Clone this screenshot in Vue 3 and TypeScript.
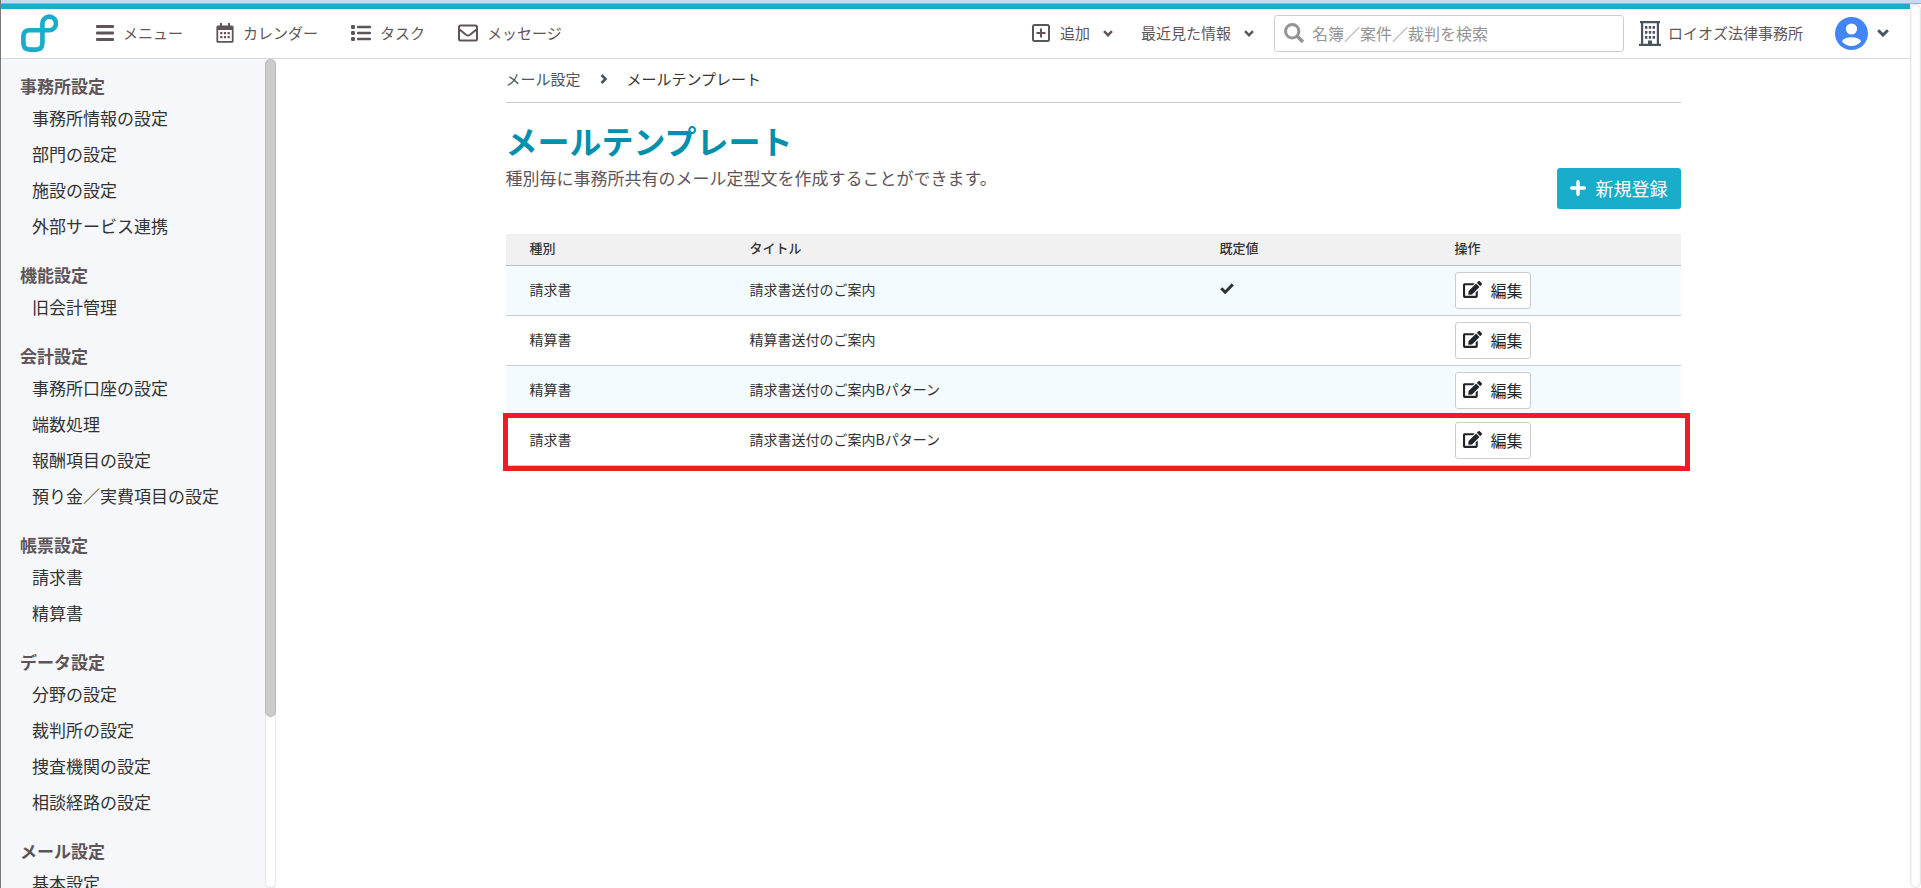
<script setup lang="ts">
interface MenuGroup {
  title: string
  items: string[]
}

interface Template {
  id: number
  kind: string
  title: string
  isDefault: boolean
  highlighted: boolean
}

const groups: MenuGroup[] = [
  { title: '事務所設定', items: ['事務所情報の設定', '部門の設定', '施設の設定', '外部サービス連携'] },
  { title: '機能設定', items: ['旧会計管理'] },
  { title: '会計設定', items: ['事務所口座の設定', '端数処理', '報酬項目の設定', '預り金／実費項目の設定'] },
  { title: '帳票設定', items: ['請求書', '精算書'] },
  { title: 'データ設定', items: ['分野の設定', '裁判所の設定', '捜査機関の設定', '相談経路の設定'] },
  { title: 'メール設定', items: ['基本設定'] },
]

const templates: Template[] = [
  { id: 1, kind: '請求書', title: '請求書送付のご案内', isDefault: true, highlighted: false },
  { id: 2, kind: '精算書', title: '精算書送付のご案内', isDefault: false, highlighted: false },
  { id: 3, kind: '精算書', title: '請求書送付のご案内Bパターン', isDefault: false, highlighted: false },
  { id: 4, kind: '請求書', title: '請求書送付のご案内Bパターン', isDefault: false, highlighted: true },
]
</script>

<template>
  <div class="window">
    <div class="window-edge"></div>
    <div class="viewport">
      <div class="app">
        <header class="header">
          <a class="logo" href="#" aria-label="ホーム">
            <svg width="37" height="38" viewBox="0 0 37 38" fill="none" stroke="#19accb" stroke-width="4.6">
              <path d="M8.5 16.2H28A6.8 6.8 0 1 0 21.4 9.4V29Q21.4 35.6 15 35.6H9Q2.4 35.6 2.4 29V22.5Q2.4 16.2 8.5 16.2Z" />
            </svg>
          </a>
          <nav class="nav">
            <button type="button" class="nav-item">
              <svg width="18" height="18" viewBox="0 0 18 18" fill="currentColor">
                <rect y="1" width="18" height="3" rx="1" />
                <rect y="7.5" width="18" height="3" rx="1" />
                <rect y="14" width="18" height="3" rx="1" />
              </svg>
              メニュー
            </button>
            <a class="nav-item" href="#">
              <svg width="18" height="20" viewBox="0 0 18 20" fill="currentColor">
                <path fill-rule="evenodd" d="M4 0h2v2.5h6V0h2v2.5h2q1.6 0 1.6 1.6v14.1q0 1.6-1.6 1.6H2Q.4 19.800 .4 18.200V4.100Q.4 2.500 2 2.500h2zM2.200 7v10.500q0 .5.500.5h12.600q.5 0 .5-.5V7z" />
                <path d="M4.200 9h2.200v2.200H4.200zM7.900 9h2.200v2.200H7.900zM11.600 9h2.200v2.200h-2.200zM4.200 13h2.200v2.200H4.200zM7.900 13h2.200v2.200H7.900zM11.600 13h2.200v2.200h-2.200z" />
              </svg>
              カレンダー
            </a>
            <a class="nav-item" href="#">
              <svg width="20" height="18" viewBox="0 0 20 18" fill="currentColor">
                <rect y="1" width="4" height="4" rx="1.200" />
                <rect y="7" width="4" height="4" rx="1.200" />
                <rect y="13" width="4" height="4" rx="1.200" />
                <rect x="6" y="1.800" width="14" height="2.400" rx=".8" />
                <rect x="6" y="7.800" width="14" height="2.400" rx=".8" />
                <rect x="6" y="13.800" width="14" height="2.400" rx=".8" />
              </svg>
              タスク
            </a>
            <a class="nav-item" href="#">
              <svg width="20" height="18" viewBox="0 0 20 18" fill="none" stroke="currentColor" stroke-width="2">
                <rect x="1" y="1.500" width="18" height="15" rx="1.500" />
                <path d="M1.500 5.500l6.500 5.300q2 1.500 4 0l6.500-5.300" />
              </svg>
              メッセージ
            </a>
          </nav>

          <div class="tools">
            <button type="button" class="drop">
              <svg class="lead" width="18" height="18" viewBox="0 0 18 18" fill="none" stroke="currentColor" stroke-width="2">
                <rect x="1" y="1" width="16" height="16" rx="1.500" />
                <path d="M4.500 9h9M9 4.500v9" />
              </svg>
              追加
              <svg class="chev" width="10" height="7" viewBox="0 0 10 7" fill="none" stroke="currentColor" stroke-width="2.400">
                <path d="M1 1.200l4 4 4-4" />
              </svg>
            </button>
            <button type="button" class="drop">
              最近見た情報
              <svg class="chev" width="10" height="7" viewBox="0 0 10 7" fill="none" stroke="currentColor" stroke-width="2.400">
                <path d="M1 1.200l4 4 4-4" />
              </svg>
            </button>
            <label class="search">
              <svg width="20" height="20" viewBox="0 0 20 20" fill="none" stroke="#949494">
                <circle cx="8.200" cy="8.200" r="6.700" stroke-width="3" />
                <path d="M13 13l6 6" stroke-width="3.600" />
              </svg>
              <input type="text" placeholder="名簿／案件／裁判を検索" aria-label="検索" />
            </label>
            <a class="office" href="#">
              <svg width="22" height="25" viewBox="0 0 22 25" fill="#4b5560">
                <path fill-rule="evenodd" d="M1 0h20v2.200h-1V22.700h2V25H0v-2.300h2V2.200H1zM4.200 2.200v20.500h4.800V19.500h4v3.200h4.800V2.200z" />
                <path d="M6 5h2.400v2.800H6zM9.800 5h2.400v2.800H9.800zM13.600 5H16v2.800h-2.400zM6 10h2.400v2.800H6zM9.800 10h2.400v2.800H9.800zM13.600 10H16v2.800h-2.400zM6 15h2.400v2.800H6zM9.800 15h2.400v2.800H9.800zM13.600 15H16v2.800h-2.400z" />
              </svg>
              ロイオズ法律事務所
            </a>
            <button type="button" class="account" aria-label="アカウント">
              <svg width="33" height="33" viewBox="0 0 33 33">
                <circle cx="16.500" cy="16.500" r="16.500" fill="#4285f4" />
                <circle cx="16.500" cy="12" r="5.600" fill="#fff" />
                <path d="M6.800 24.200Q9.500 20.300 16.500 20.300t9.700 3.900Q22.500 29 16.500 29T6.800 24.200z" fill="#fff" />
              </svg>
              <svg width="12" height="8" viewBox="0 0 12 8" fill="none" stroke="#4b5560" stroke-width="3">
                <path d="M1.200 1.300L6 6l4.800-4.700" />
              </svg>
            </button>
          </div>
        </header>

        <div class="body">
          <aside class="sidebar">
            <nav class="side-nav">
              <section v-for="group in groups" :key="group.title" class="group">
                <h2>{{ group.title }}</h2>
                <ul>
                  <li v-for="item in group.items" :key="item"><a href="#">{{ item }}</a></li>
                </ul>
              </section>
            </nav>
            <div class="side-track"><div class="side-thumb"></div></div>
          </aside>

          <main class="main">
            <div class="content">
              <nav class="crumbs" aria-label="パンくず">
                <a href="#">メール設定</a>
                <svg width="8" height="10" viewBox="0 0 8 10" fill="none" stroke="#4b5560" stroke-width="2.600">
                  <path d="M1.500 1l4 4-4 4" />
                </svg>
                <span>メールテンプレート</span>
              </nav>
              <div class="heading">
                <div>
                  <h1>メールテンプレート</h1>
                  <p>種別毎に事務所共有のメール定型文を作成することができます。</p>
                </div>
                <button type="button" class="create">
                  <svg width="16" height="16" viewBox="0 0 16 16" fill="none" stroke="#fff" stroke-width="3.400" stroke-linecap="round">
                    <path d="M1.700 8h12.600M8 1.700v12.600" />
                  </svg>
                  新規登録
                </button>
              </div>

              <table class="table">
                <colgroup>
                  <col class="col-kind" />
                  <col class="col-title" />
                  <col class="col-default" />
                  <col />
                </colgroup>
                <thead>
                  <tr>
                    <th scope="col">種別</th>
                    <th scope="col">タイトル</th>
                    <th scope="col">既定値</th>
                    <th scope="col">操作</th>
                  </tr>
                </thead>
                <tbody>
                  <tr v-for="row in templates" :key="row.id" :class="{ highlighted: row.highlighted }">
                    <td>{{ row.kind }}</td>
                    <td>{{ row.title }}</td>
                    <td>
                      <svg v-if="row.isDefault" class="check" width="14" height="11" viewBox="0 0 14 11" fill="none" stroke="#333" stroke-width="3">
                        <path d="M1.200 5.200l4 4 7.600-7.800" />
                      </svg>
                    </td>
                    <td class="action">
                      <button type="button" class="edit">
                        <svg width="19" height="17" viewBox="0 0 576 512" fill="currentColor">
                          <path d="M402.600 83.200l90.200 90.200c3.800 3.800 3.800 10 0 13.800L274.400 405.600l-92.800 10.300c-12.400 1.400-22.900-9.100-21.500-21.500l10.300-92.800L388.800 83.200c3.800-3.800 10-3.800 13.800 0zm162-22.900l-48.800-48.800c-15.200-15.200-39.900-15.200-55.200 0l-35.400 35.400c-3.800 3.800-3.800 10 0 13.800l90.200 90.200c3.800 3.800 10 3.800 13.800 0l35.400-35.400c15.200-15.300 15.200-40 0-55.200zM384 346.200V448H64V128h229.800c3.200 0 6.200-1.300 8.500-3.500l40-40c7.600-7.600 2.200-20.500-8.500-20.500H48C21.500 64 0 85.500 0 112v352c0 26.500 21.500 48 48 48h352c26.500 0 48-21.500 48-48V306.200c0-10.700-12.900-16-20.500-8.500l-40 40c-2.200 2.300-3.500 5.300-3.500 8.500z" />
                        </svg>
                        編集
                      </button>
                    </td>
                  </tr>
                </tbody>
              </table>
            </div>
          </main>
        </div>
      </div>
      <div class="page-track"></div>
    </div>
  </div>
</template>

<style>
body {
  margin: 0;
  background: #fff;
}
</style>

<style scoped>
.window {
  display: flex;
  flex-direction: column;
  height: 100vh;
  overflow: hidden;
  box-sizing: border-box;
  border-left: 1px solid #77787c;
  color: #333;
  font-family: "Noto Sans CJK JP", sans-serif;
  font-weight: 400;
  font-size: 15px;
}

.window *,
.window *::after {
  box-sizing: border-box;
}

.window svg {
  flex: none;
  display: block;
}

button {
  margin: 0;
  padding: 0;
  border: 0;
  background: none;
  color: inherit;
  font: inherit;
  cursor: pointer;
}

a {
  color: inherit;
  text-decoration: none;
}

.window-edge {
  flex: none;
  height: 4px;
  background: #c8d9f5;
  border-bottom: 1px solid #9fb0cc;
}

.viewport {
  flex: 1;
  display: flex;
  min-height: 0;
}

.app {
  flex: 1;
  min-width: 0;
  display: flex;
  flex-direction: column;
}

.page-track {
  flex: none;
  width: 11px;
  border: 1px solid #e4e4e4;
  border-radius: 6px;
  box-shadow: inset 0 0 2px #e4e4e4;
}

.header {
  flex: none;
  display: flex;
  align-items: center;
  height: 55px;
  padding: 0 21px 1px 20px;
  border-top: 5px solid #19accb;
  border-bottom: 1px solid #d9d9d9;
  color: #5f5558;
  line-height: 24px;
  white-space: nowrap;
}

.logo {
  margin-right: 38px;
}

.nav {
  display: flex;
  gap: 33px;
}

.nav-item {
  display: flex;
  align-items: center;
  gap: 9px;
}

.tools {
  display: flex;
  align-items: center;
  margin-left: auto;
}

.drop {
  display: flex;
  align-items: center;
  margin-right: 28px;
}

.drop + .search {
  margin-left: -8px;
}

.lead {
  margin-right: 10px;
}

.chev {
  margin-left: 13px;
}

.search {
  display: flex;
  align-items: center;
  gap: 8px;
  width: 350px;
  height: 37px;
  padding: 0 9px;
  border: 1px solid #cbcfd4;
  border-radius: 3px;
}

.search input {
  flex: 1;
  min-width: 0;
  padding: 0;
  border: 0;
  outline: 0;
  background: none;
  color: #333;
  font: inherit;
  font-size: 16px;
}

.search input::placeholder {
  color: #949494;
  opacity: 1;
}

.office {
  display: flex;
  align-items: center;
  gap: 7px;
  margin-left: 15px;
}

.account {
  display: flex;
  align-items: center;
  gap: 9px;
  margin-left: 32px;
}

.body {
  flex: 1;
  display: flex;
  min-height: 0;
}

.sidebar {
  flex: none;
  display: flex;
  width: 275px;
  background: #f5f7fa;
}

.side-nav {
  flex: 1;
  padding: 13px 0 0 19px;
  overflow: hidden;
  font-size: 17px;
}

.group {
  margin-bottom: 17px;
}

.group h2 {
  margin: 0;
  color: #5f5558;
  font-size: 17px;
  font-weight: 700;
  line-height: 28px;
}

.group ul {
  margin: 0;
  padding: 0 0 0 12px;
  list-style: none;
}

.group li {
  line-height: 36px;
}

.side-track {
  flex: none;
  width: 11px;
  background: #fff;
  border: 1px solid #e8e8ea;
  border-top: 0;
  border-radius: 6px;
}

.side-thumb {
  height: 79.5%;
  margin: 0 -1px;
  border: 1px solid #b9b9b9;
  border-radius: 6px;
  background: #cbcbcb;
}

.main {
  flex: 1;
  min-width: 0;
  overflow: hidden;
}

.content {
  width: 100%;
  max-width: 1175px;
  margin: 0 auto;
}

.crumbs {
  display: flex;
  align-items: center;
  height: 44px;
  padding-bottom: 4px;
  border-bottom: 1px solid #c8c8c8;
  gap: 19px;
}

.crumbs a {
  color: #4b5560;
}

.heading {
  display: flex;
  justify-content: space-between;
  align-items: flex-end;
  padding-top: 13px;
}

.heading h1 {
  margin: 0;
  color: #0090ae;
  font-size: 32px;
  font-weight: 700;
  line-height: 48px;
}

.heading p {
  margin: 0;
  padding: 1px 0 18px;
  color: #5f5558;
  font-size: 17px;
  line-height: 26px;
}

.create {
  display: flex;
  align-items: center;
  gap: 10px;
  height: 41px;
  padding: 0 13px 2px;
  border-radius: 3px;
  background: #19accb;
  color: #fff;
  font-size: 18px;
  line-height: 26px;
}

.table {
  width: 100%;
  margin-top: 25px;
  border-spacing: 0;
  table-layout: fixed;
  font-size: 14px;
}

.col-kind {
  width: 220px;
}

.col-title {
  width: 40%;
}

.col-default {
  width: 20%;
}

th {
  height: 32px;
  padding: 0 24px 4px;
  border-bottom: 1px solid #b8bbbf;
  background: #f1f1f1;
  font-size: 13px;
  font-weight: 500;
  line-height: 20px;
  text-align: left;
}

td {
  height: 50px;
  padding: 0 24px 4px;
  border-bottom: 1px solid #c9cdd1;
  line-height: 20px;
}

tbody tr {
  position: relative;
}

tbody tr:nth-child(odd) {
  background: #f3fbfe;
}

/* Frame that calls out the selected row */
.highlighted td:first-child::after {
  content: "";
  position: absolute;
  inset: -3px -9px -5px -3px;
  border: 5px solid #ee1c24;
  pointer-events: none;
}

td.action {
  padding-bottom: 0;
}

.edit {
  display: flex;
  align-items: center;
  gap: 9px;
  height: 37px;
  padding: 0 7px 2px;
  border: 1px solid #ccc;
  border-radius: 3px;
  background: #fff;
  color: #212529;
  font-size: 16px;
}
</style>
